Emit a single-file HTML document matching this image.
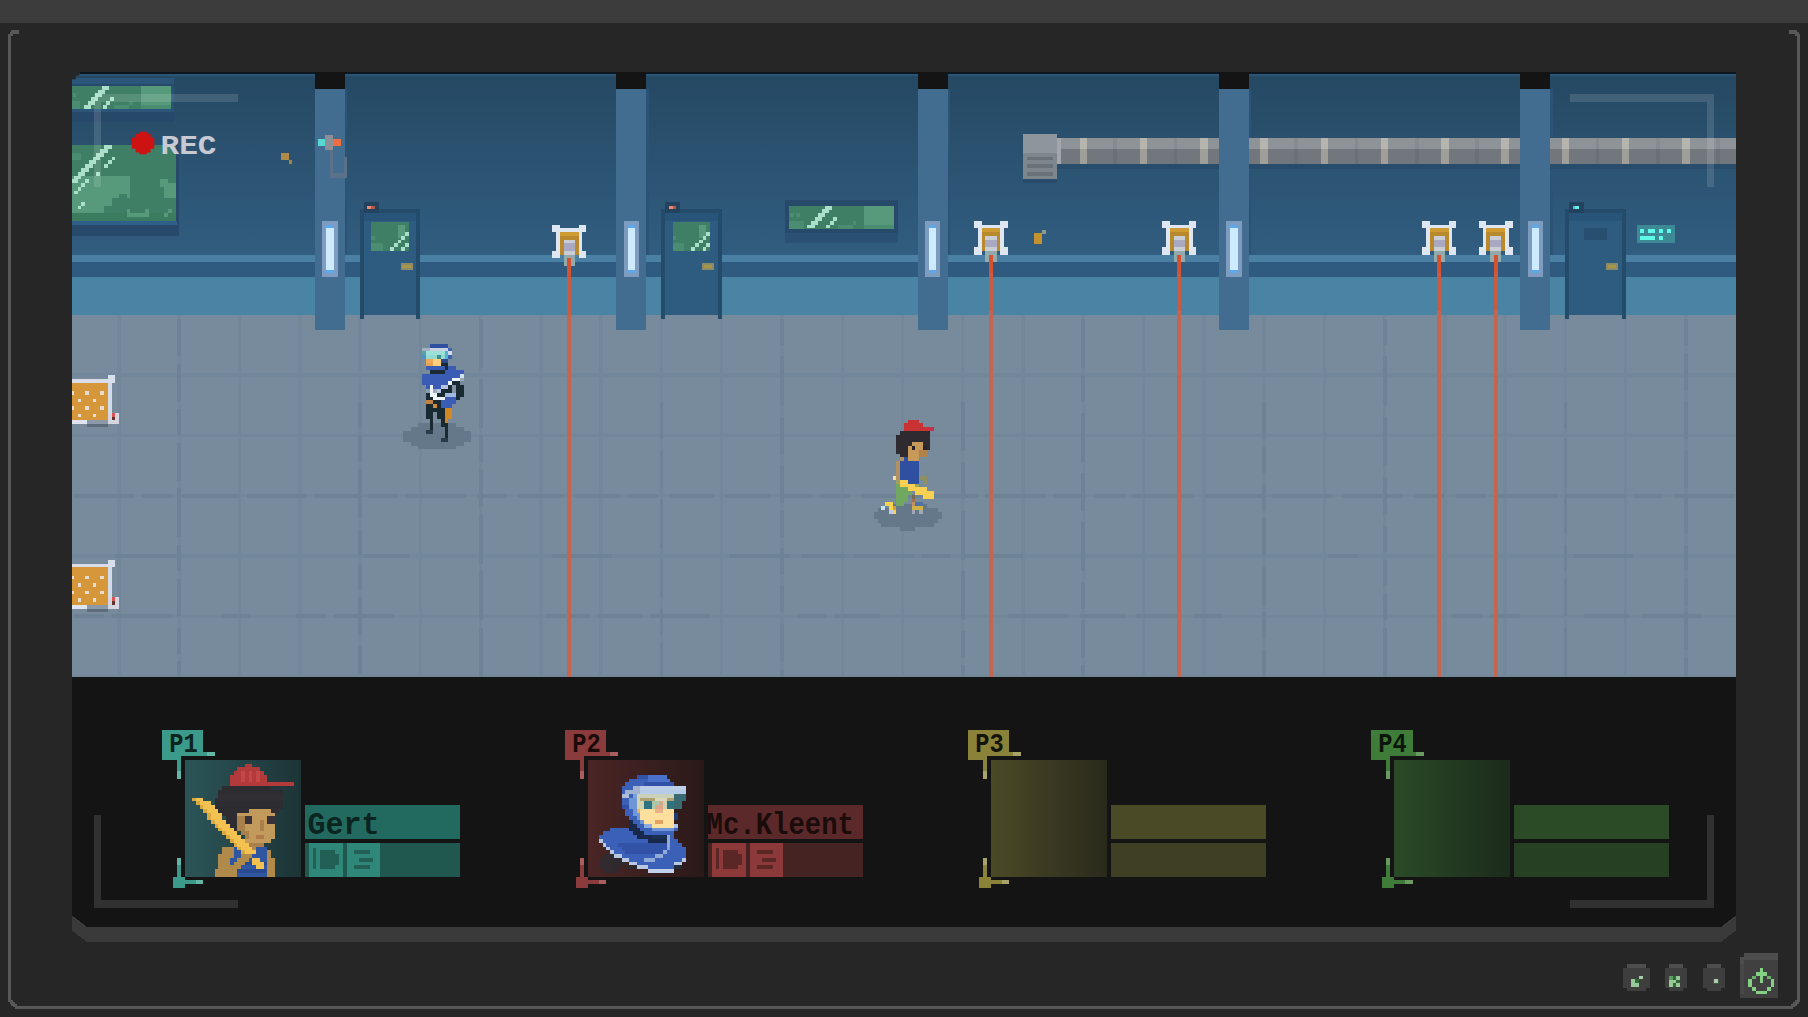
<!DOCTYPE html>
<html lang="en"><head><meta charset="utf-8"><title>Security Cam</title>
<style>
html,body{margin:0;padding:0;background:#262626;overflow:hidden}
svg{display:block}
text{font-family:"Liberation Sans",sans-serif;font-weight:bold}
text.m{font-family:"Liberation Mono",monospace;font-weight:bold}
</style></head><body>
<svg width="1808" height="1017" viewBox="0 0 1808 1017" shape-rendering="crispEdges">
<defs>
<linearGradient id="wallg" x1="0" y1="0" x2="0" y2="1"><stop offset="0" stop-color="#254862"/><stop offset="1" stop-color="#315d80"/></linearGradient>
<clipPath id="scr"><path d="M79.5 72H1736V677H72V79.5H75.8V75.8H79.5Z"/></clipPath>
<linearGradient id="pg0" x1="0" y1="0" x2="1" y2="0"><stop offset="0" stop-color="#2c5558"/><stop offset="1" stop-color="#1c3436"/></linearGradient>
<linearGradient id="pg1" x1="0" y1="0" x2="1" y2="0"><stop offset="0" stop-color="#4b2525"/><stop offset="1" stop-color="#2a1919"/></linearGradient>
<linearGradient id="pg2" x1="0" y1="0" x2="1" y2="0"><stop offset="0" stop-color="#4b4a27"/><stop offset="1" stop-color="#2a2a1c"/></linearGradient>
<linearGradient id="pg3" x1="0" y1="0" x2="1" y2="0"><stop offset="0" stop-color="#2b4b27"/><stop offset="1" stop-color="#1b2b1b"/></linearGradient>
</defs>
<rect x="0" y="0" width="1808" height="1017" fill="#262626"/>
<rect x="0" y="0" width="1808" height="22.5" fill="#3c3c3c"/>
<rect x="7.8" y="34" width="3.5" height="967.5" fill="#585858"/>
<rect x="11.3" y="30" width="7.5" height="3.8" fill="#585858"/>
<rect x="9.5" y="31.8" width="3.5" height="3.8" fill="#585858"/>
<rect x="1796.7" y="34" width="3.5" height="967.5" fill="#585858"/>
<rect x="1789.2" y="30" width="7.5" height="3.8" fill="#585858"/>
<rect x="1795" y="31.8" width="3.5" height="3.8" fill="#585858"/>
<rect x="15" y="1005.5" width="1778" height="3.5" fill="#585858"/>
<rect x="9.5" y="1000" width="3.7" height="3.7" fill="#585858"/>
<rect x="11.3" y="1001.8" width="3.7" height="3.7" fill="#585858"/>
<rect x="13.2" y="1003.7" width="3.8" height="3.7" fill="#585858"/>
<rect x="1794.8" y="1000" width="3.7" height="3.7" fill="#585858"/>
<rect x="1793" y="1001.8" width="3.7" height="3.7" fill="#585858"/>
<rect x="1791" y="1003.7" width="3.8" height="3.7" fill="#585858"/>
<path d="M72 900H1736V930.5L1721.3 941.8H86.7L72 930.5Z" fill="#3a3a3a"/>
<path d="M72 677H1736V915.4L1721.3 926.7H86.7L72 915.4Z" fill="#141414"/>
<g clip-path="url(#scr)"><g>
<g transform="translate(-1.5 -1.5) scale(3.76667)">
<rect x="18" y="19" width="446" height="49" fill="url(#wallg)"/>
<rect x="18" y="68" width="446" height="2" fill="#4a80a3"/>
<rect x="18" y="70" width="446" height="4" fill="#2f5b80"/>
<rect x="18" y="74" width="446" height="10" fill="#4a84a4"/>
<rect x="18" y="84" width="446" height="97" fill="#778b9c"/>
<rect x="18" y="19.9" width="446" height="0.8" fill="#2b5577"/>
<rect x="18" y="19" width="446" height="0.95" fill="#0d151d"/>
<rect x="31.55" y="84" width="0.9" height="97" fill="#72879a"/>
<rect x="47.55" y="84" width="0.9" height="97" fill="#72879a"/>
<rect x="63.55" y="84" width="0.9" height="97" fill="#72879a"/>
<rect x="79.55" y="84" width="0.9" height="97" fill="#72879a"/>
<rect x="95.55" y="84" width="0.9" height="97" fill="#72879a"/>
<rect x="111.55" y="84" width="0.9" height="97" fill="#72879a"/>
<rect x="127.55" y="84" width="0.9" height="97" fill="#72879a"/>
<rect x="143.55" y="84" width="0.9" height="97" fill="#72879a"/>
<rect x="159.55" y="84" width="0.9" height="97" fill="#72879a"/>
<rect x="175.55" y="84" width="0.9" height="97" fill="#72879a"/>
<rect x="191.55" y="84" width="0.9" height="97" fill="#72879a"/>
<rect x="207.55" y="84" width="0.9" height="97" fill="#72879a"/>
<rect x="223.55" y="84" width="0.9" height="97" fill="#72879a"/>
<rect x="239.55" y="84" width="0.9" height="97" fill="#72879a"/>
<rect x="255.55" y="84" width="0.9" height="97" fill="#72879a"/>
<rect x="271.55" y="84" width="0.9" height="97" fill="#72879a"/>
<rect x="287.55" y="84" width="0.9" height="97" fill="#72879a"/>
<rect x="303.55" y="84" width="0.9" height="97" fill="#72879a"/>
<rect x="319.55" y="84" width="0.9" height="97" fill="#72879a"/>
<rect x="335.55" y="84" width="0.9" height="97" fill="#72879a"/>
<rect x="351.55" y="84" width="0.9" height="97" fill="#72879a"/>
<rect x="367.55" y="84" width="0.9" height="97" fill="#72879a"/>
<rect x="383.55" y="84" width="0.9" height="97" fill="#72879a"/>
<rect x="399.55" y="84" width="0.9" height="97" fill="#72879a"/>
<rect x="415.55" y="84" width="0.9" height="97" fill="#72879a"/>
<rect x="431.55" y="84" width="0.9" height="97" fill="#72879a"/>
<rect x="447.55" y="84" width="0.9" height="97" fill="#72879a"/>
<rect x="18" y="99.55" width="446" height="0.9" fill="#72879a"/>
<rect x="18" y="115.55" width="446" height="0.9" fill="#72879a"/>
<rect x="18" y="131.55" width="446" height="0.9" fill="#72879a"/>
<rect x="18" y="147.55" width="446" height="0.9" fill="#72879a"/>
<rect x="18" y="163.55" width="446" height="0.9" fill="#72879a"/>
<rect x="18" y="179.55" width="446" height="0.9" fill="#72879a"/>
<rect x="47.5" y="85" width="1" height="10" fill="#6d8295"/>
<rect x="47.5" y="97" width="1" height="10" fill="#6d8295"/>
<rect x="47.5" y="109" width="1" height="7" fill="#6d8295"/>
<rect x="47.5" y="118" width="1" height="10" fill="#6d8295"/>
<rect x="47.5" y="130" width="1" height="13" fill="#6d8295"/>
<rect x="47.5" y="145" width="1" height="7" fill="#6d8295"/>
<rect x="47.5" y="154" width="1" height="10" fill="#6d8295"/>
<rect x="47.5" y="167" width="1" height="7" fill="#6d8295"/>
<rect x="47.5" y="176" width="1" height="4" fill="#6d8295"/>
<rect x="95.5" y="107" width="1" height="7" fill="#6d8295"/>
<rect x="95.5" y="116" width="1" height="7" fill="#6d8295"/>
<rect x="95.5" y="125" width="1" height="13" fill="#6d8295"/>
<rect x="95.5" y="141" width="1" height="7" fill="#6d8295"/>
<rect x="95.5" y="150" width="1" height="7" fill="#6d8295"/>
<rect x="95.5" y="159" width="1" height="10" fill="#6d8295"/>
<rect x="95.5" y="172" width="1" height="7" fill="#6d8295"/>
<rect x="127.5" y="85" width="1" height="13" fill="#6d8295"/>
<rect x="127.5" y="101" width="1" height="13" fill="#6d8295"/>
<rect x="127.5" y="116" width="1" height="7" fill="#6d8295"/>
<rect x="127.5" y="125" width="1" height="10" fill="#6d8295"/>
<rect x="127.5" y="137" width="1" height="13" fill="#6d8295"/>
<rect x="127.5" y="152" width="1" height="13" fill="#6d8295"/>
<rect x="127.5" y="167" width="1" height="13" fill="#6d8295"/>
<rect x="175.5" y="107" width="1" height="10" fill="#6d8295"/>
<rect x="175.5" y="120" width="1" height="10" fill="#6d8295"/>
<rect x="175.5" y="133" width="1" height="13" fill="#6d8295"/>
<rect x="175.5" y="149" width="1" height="10" fill="#6d8295"/>
<rect x="175.5" y="162" width="1" height="7" fill="#6d8295"/>
<rect x="175.5" y="171" width="1" height="9" fill="#6d8295"/>
<rect x="207.5" y="85" width="1" height="7" fill="#6d8295"/>
<rect x="207.5" y="95" width="1" height="13" fill="#6d8295"/>
<rect x="207.5" y="111" width="1" height="10" fill="#6d8295"/>
<rect x="207.5" y="124" width="1" height="10" fill="#6d8295"/>
<rect x="207.5" y="136" width="1" height="7" fill="#6d8295"/>
<rect x="207.5" y="146" width="1" height="7" fill="#6d8295"/>
<rect x="207.5" y="156" width="1" height="7" fill="#6d8295"/>
<rect x="207.5" y="166" width="1" height="10" fill="#6d8295"/>
<rect x="207.5" y="178" width="1" height="2" fill="#6d8295"/>
<rect x="255.5" y="107" width="1" height="13" fill="#6d8295"/>
<rect x="255.5" y="123" width="1" height="10" fill="#6d8295"/>
<rect x="255.5" y="136" width="1" height="13" fill="#6d8295"/>
<rect x="255.5" y="152" width="1" height="13" fill="#6d8295"/>
<rect x="255.5" y="168" width="1" height="7" fill="#6d8295"/>
<rect x="255.5" y="177" width="1" height="3" fill="#6d8295"/>
<rect x="287.5" y="85" width="1" height="13" fill="#6d8295"/>
<rect x="287.5" y="100" width="1" height="7" fill="#6d8295"/>
<rect x="287.5" y="110" width="1" height="13" fill="#6d8295"/>
<rect x="287.5" y="126" width="1" height="10" fill="#6d8295"/>
<rect x="287.5" y="139" width="1" height="13" fill="#6d8295"/>
<rect x="287.5" y="155" width="1" height="7" fill="#6d8295"/>
<rect x="287.5" y="165" width="1" height="10" fill="#6d8295"/>
<rect x="287.5" y="177" width="1" height="3" fill="#6d8295"/>
<rect x="335.5" y="107" width="1" height="10" fill="#6d8295"/>
<rect x="335.5" y="119" width="1" height="7" fill="#6d8295"/>
<rect x="335.5" y="129" width="1" height="7" fill="#6d8295"/>
<rect x="335.5" y="138" width="1" height="10" fill="#6d8295"/>
<rect x="335.5" y="151" width="1" height="10" fill="#6d8295"/>
<rect x="335.5" y="163" width="1" height="7" fill="#6d8295"/>
<rect x="335.5" y="173" width="1" height="7" fill="#6d8295"/>
<rect x="367.5" y="85" width="1" height="7" fill="#6d8295"/>
<rect x="367.5" y="95" width="1" height="13" fill="#6d8295"/>
<rect x="367.5" y="111" width="1" height="13" fill="#6d8295"/>
<rect x="367.5" y="127" width="1" height="10" fill="#6d8295"/>
<rect x="367.5" y="140" width="1" height="7" fill="#6d8295"/>
<rect x="367.5" y="149" width="1" height="7" fill="#6d8295"/>
<rect x="367.5" y="158" width="1" height="7" fill="#6d8295"/>
<rect x="367.5" y="167" width="1" height="13" fill="#6d8295"/>
<rect x="415.5" y="107" width="1" height="7" fill="#6d8295"/>
<rect x="415.5" y="117" width="1" height="13" fill="#6d8295"/>
<rect x="415.5" y="132" width="1" height="10" fill="#6d8295"/>
<rect x="415.5" y="145" width="1" height="7" fill="#6d8295"/>
<rect x="415.5" y="154" width="1" height="10" fill="#6d8295"/>
<rect x="415.5" y="167" width="1" height="13" fill="#6d8295"/>
<rect x="447.5" y="85" width="1" height="7" fill="#6d8295"/>
<rect x="447.5" y="94" width="1" height="10" fill="#6d8295"/>
<rect x="447.5" y="107" width="1" height="10" fill="#6d8295"/>
<rect x="447.5" y="120" width="1" height="10" fill="#6d8295"/>
<rect x="447.5" y="132" width="1" height="10" fill="#6d8295"/>
<rect x="447.5" y="145" width="1" height="7" fill="#6d8295"/>
<rect x="447.5" y="154" width="1" height="7" fill="#6d8295"/>
<rect x="447.5" y="163" width="1" height="10" fill="#6d8295"/>
<rect x="447.5" y="175" width="1" height="5" fill="#6d8295"/>
<rect x="20" y="131.5" width="16" height="1" fill="#6d8295"/>
<rect x="38" y="131.5" width="8" height="1" fill="#6d8295"/>
<rect x="48" y="131.5" width="16" height="1" fill="#6d8295"/>
<rect x="66" y="131.5" width="16" height="1" fill="#6d8295"/>
<rect x="84" y="131.5" width="12" height="1" fill="#6d8295"/>
<rect x="98" y="131.5" width="8" height="1" fill="#6d8295"/>
<rect x="108" y="131.5" width="16" height="1" fill="#6d8295"/>
<rect x="127" y="131.5" width="8" height="1" fill="#6d8295"/>
<rect x="138" y="131.5" width="12" height="1" fill="#6d8295"/>
<rect x="153" y="131.5" width="12" height="1" fill="#6d8295"/>
<rect x="167" y="131.5" width="8" height="1" fill="#6d8295"/>
<rect x="178" y="131.5" width="12" height="1" fill="#6d8295"/>
<rect x="193" y="131.5" width="12" height="1" fill="#6d8295"/>
<rect x="208" y="131.5" width="8" height="1" fill="#6d8295"/>
<rect x="218" y="131.5" width="8" height="1" fill="#6d8295"/>
<rect x="229" y="131.5" width="16" height="1" fill="#6d8295"/>
<rect x="248" y="131.5" width="12" height="1" fill="#6d8295"/>
<rect x="262" y="131.5" width="16" height="1" fill="#6d8295"/>
<rect x="280" y="131.5" width="8" height="1" fill="#6d8295"/>
<rect x="291" y="131.5" width="8" height="1" fill="#6d8295"/>
<rect x="301" y="131.5" width="16" height="1" fill="#6d8295"/>
<rect x="320" y="131.5" width="16" height="1" fill="#6d8295"/>
<rect x="338" y="131.5" width="16" height="1" fill="#6d8295"/>
<rect x="357" y="131.5" width="16" height="1" fill="#6d8295"/>
<rect x="376" y="131.5" width="8" height="1" fill="#6d8295"/>
<rect x="387" y="131.5" width="8" height="1" fill="#6d8295"/>
<rect x="398" y="131.5" width="16" height="1" fill="#6d8295"/>
<rect x="416" y="131.5" width="16" height="1" fill="#6d8295"/>
<rect x="434" y="131.5" width="8" height="1" fill="#6d8295"/>
<rect x="445" y="131.5" width="16" height="1" fill="#6d8295"/>
<rect x="31" y="147.5" width="16" height="1" fill="#6d8295"/>
<rect x="97" y="147.5" width="12" height="1" fill="#6d8295"/>
<rect x="147" y="147.5" width="16" height="1" fill="#6d8295"/>
<rect x="194" y="147.5" width="16" height="1" fill="#6d8295"/>
<rect x="213" y="147.5" width="12" height="1" fill="#6d8295"/>
<rect x="227" y="147.5" width="16" height="1" fill="#6d8295"/>
<rect x="245" y="147.5" width="8" height="1" fill="#6d8295"/>
<rect x="256" y="147.5" width="16" height="1" fill="#6d8295"/>
<rect x="353" y="147.5" width="8" height="1" fill="#6d8295"/>
<rect x="418" y="147.5" width="16" height="1" fill="#6d8295"/>
<rect x="20" y="163.5" width="8" height="1" fill="#6d8295"/>
<rect x="30" y="163.5" width="16" height="1" fill="#6d8295"/>
<rect x="59" y="163.5" width="8" height="1" fill="#6d8295"/>
<rect x="79" y="163.5" width="8" height="1" fill="#6d8295"/>
<rect x="89" y="163.5" width="16" height="1" fill="#6d8295"/>
<rect x="145" y="163.5" width="12" height="1" fill="#6d8295"/>
<rect x="159" y="163.5" width="12" height="1" fill="#6d8295"/>
<rect x="173" y="163.5" width="16" height="1" fill="#6d8295"/>
<rect x="212" y="163.5" width="8" height="1" fill="#6d8295"/>
<rect x="222" y="163.5" width="12" height="1" fill="#6d8295"/>
<rect x="268" y="163.5" width="16" height="1" fill="#6d8295"/>
<rect x="287" y="163.5" width="12" height="1" fill="#6d8295"/>
<rect x="302" y="163.5" width="12" height="1" fill="#6d8295"/>
<rect x="317" y="163.5" width="8" height="1" fill="#6d8295"/>
<rect x="386" y="163.5" width="8" height="1" fill="#6d8295"/>
<rect x="396" y="163.5" width="8" height="1" fill="#6d8295"/>
<rect x="421" y="163.5" width="12" height="1" fill="#6d8295"/>
<rect x="436" y="163.5" width="16" height="1" fill="#6d8295"/>
<rect x="16.7" y="21.1" width="30" height="1.5" fill="#2b5579"/>
<rect x="16.7" y="22.6" width="30" height="0.6" fill="#27496a"/>
<rect x="16.7" y="29.2" width="30" height="0.8" fill="#2b5579"/>
<rect x="16.7" y="30.2" width="30" height="2.6" fill="#26496a"/>
<rect x="45.7" y="23.2" width="1" height="7" fill="#2a5378"/>
<rect x="17.7" y="23.2" width="28" height="6.1" fill="#3f7f65"/>
<rect x="37.7" y="23.2" width="8" height="5" fill="#569a7b"/>
<rect x="37.7" y="28.2" width="8" height="1.1" fill="#4a8d70"/>
<rect x="17.7" y="27.2" width="4" height="2.1" fill="#4a8d70"/>
<rect x="30.7" y="28.4" width="4" height="0.9" fill="#4a8d70"/>
<rect x="18.2" y="25.2" width="1" height="1" fill="#4a8d70"/>
<rect x="19.7" y="25.2" width="1" height="1" fill="#4a8d70"/>
<rect x="34.7" y="27.2" width="1" height="1" fill="#4a8d70"/>
<rect x="22.7" y="28.2" width="1.9" height="1.05" fill="#a9dfcb"/>
<rect x="23.65" y="27.2" width="1.9" height="1.05" fill="#a9dfcb"/>
<rect x="24.6" y="26.2" width="1.9" height="1.05" fill="#a9dfcb"/>
<rect x="25.55" y="25.2" width="1.9" height="1.05" fill="#a9dfcb"/>
<rect x="26.5" y="24.2" width="1.9" height="1.05" fill="#a9dfcb"/>
<rect x="27.45" y="23.2" width="1.9" height="1.05" fill="#a9dfcb"/>
<rect x="27.7" y="28.2" width="1" height="1.05" fill="#a9dfcb"/>
<rect x="28.65" y="27.2" width="1" height="1.05" fill="#a9dfcb"/>
<rect x="29.6" y="26.2" width="1" height="1.05" fill="#a9dfcb"/>
<rect x="208.75" y="53.6" width="30" height="8.6" fill="#27496a"/>
<rect x="208.75" y="62.2" width="30" height="2.8" fill="#2a5174"/>
<rect x="209.75" y="55" width="28" height="6.1" fill="#3f7f65"/>
<rect x="229.75" y="55" width="8" height="5" fill="#569a7b"/>
<rect x="229.75" y="60" width="8" height="1.1" fill="#4a8d70"/>
<rect x="209.75" y="59" width="4" height="2.1" fill="#4a8d70"/>
<rect x="222.75" y="60.2" width="4" height="0.9" fill="#4a8d70"/>
<rect x="210.25" y="57" width="1" height="1" fill="#4a8d70"/>
<rect x="211.75" y="57" width="1" height="1" fill="#4a8d70"/>
<rect x="226.75" y="59" width="1" height="1" fill="#4a8d70"/>
<rect x="214.75" y="60" width="1.9" height="1.05" fill="#a9dfcb"/>
<rect x="215.7" y="59" width="1.9" height="1.05" fill="#a9dfcb"/>
<rect x="216.65" y="58" width="1.9" height="1.05" fill="#a9dfcb"/>
<rect x="217.6" y="57" width="1.9" height="1.05" fill="#a9dfcb"/>
<rect x="218.55" y="56" width="1.9" height="1.05" fill="#a9dfcb"/>
<rect x="219.5" y="55" width="1.9" height="1.05" fill="#a9dfcb"/>
<rect x="219.75" y="60" width="1" height="1.05" fill="#a9dfcb"/>
<rect x="220.7" y="59" width="1" height="1.05" fill="#a9dfcb"/>
<rect x="221.65" y="58" width="1" height="1.05" fill="#a9dfcb"/>
<rect x="18" y="39" width="30" height="21" fill="#27496a"/>
<rect x="18" y="60" width="30" height="3" fill="#27496a"/>
<rect x="18" y="59" width="29.3" height="1" fill="#30608a"/>
<rect x="18" y="39" width="29" height="20" fill="#3f7f65"/>
<rect x="18" y="47" width="17" height="10" fill="#569a7b"/>
<rect x="30" y="53" width="5" height="4" fill="#3f7f65"/>
<rect x="28" y="55" width="3" height="2" fill="#3f7f65"/>
<rect x="32" y="52" width="2" height="1" fill="#3f7f65"/>
<rect x="18" y="57" width="29" height="2" fill="#3b7b5f"/>
<rect x="18" y="41" width="4" height="2" fill="#4a8d70"/>
<rect x="44" y="49" width="3" height="4" fill="#569a7b"/>
<rect x="43" y="48" width="2" height="2" fill="#569a7b"/>
<rect x="34" y="57" width="6" height="1" fill="#569a7b"/>
<rect x="34" y="56" width="1" height="1" fill="#569a7b"/>
<rect x="39" y="56" width="1" height="1" fill="#569a7b"/>
<rect x="44" y="57" width="1" height="1" fill="#569a7b"/>
<rect x="45" y="56" width="1" height="1" fill="#569a7b"/>
<rect x="19" y="48" width="2" height="1" fill="#a9dfcb"/>
<rect x="20" y="47" width="2" height="1" fill="#a9dfcb"/>
<rect x="21" y="46" width="2" height="1" fill="#a9dfcb"/>
<rect x="22" y="45" width="2" height="1" fill="#a9dfcb"/>
<rect x="23" y="44" width="2" height="1" fill="#a9dfcb"/>
<rect x="24" y="43" width="2" height="1" fill="#a9dfcb"/>
<rect x="25" y="42" width="2" height="1" fill="#a9dfcb"/>
<rect x="26" y="41" width="2" height="1" fill="#a9dfcb"/>
<rect x="27" y="40" width="2" height="1" fill="#a9dfcb"/>
<rect x="28" y="39" width="2" height="1" fill="#a9dfcb"/>
<rect x="18" y="49" width="1" height="1" fill="#a9dfcb"/>
<rect x="28" y="44" width="1" height="1" fill="#a9dfcb"/>
<rect x="29" y="43" width="1" height="1" fill="#a9dfcb"/>
<rect x="30" y="42" width="1" height="1" fill="#a9dfcb"/>
<rect x="26" y="46" width="1" height="1" fill="#a9dfcb"/>
<rect x="20" y="51" width="1" height="1" fill="#a9dfcb"/>
<rect x="21" y="50" width="1" height="1" fill="#a9dfcb"/>
<rect x="22" y="49" width="1" height="1" fill="#a9dfcb"/>
<rect x="23" y="48" width="1" height="1" fill="#a9dfcb"/>
<rect x="21" y="55" width="1" height="1" fill="#a9dfcb"/>
<rect x="22" y="54" width="1" height="1" fill="#a9dfcb"/>
<rect x="92" y="24" width="0.6" height="44" fill="#2b5375"/>
<rect x="172" y="24" width="0.6" height="44" fill="#2b5375"/>
<rect x="252" y="24" width="0.6" height="44" fill="#2b5375"/>
<rect x="332" y="24" width="0.6" height="44" fill="#2b5375"/>
<rect x="412" y="24" width="0.6" height="44" fill="#2b5375"/>
<rect x="281" y="44" width="183" height="1.2" fill="#284c6c"/>
<rect x="272" y="48" width="9" height="1" fill="#284c6c"/>
<rect x="281" y="37" width="183" height="3" fill="#8e9397"/>
<rect x="281" y="40" width="183" height="4" fill="#71777c"/>
<rect x="281" y="37" width="1" height="7" fill="#a3a7ab"/>
<rect x="287" y="37" width="2" height="3" fill="#b6b4ae"/>
<rect x="287" y="40" width="2" height="4" fill="#a09e98"/>
<rect x="296" y="37" width="1" height="3" fill="#858b90"/>
<rect x="296" y="40" width="1" height="4" fill="#6a7075"/>
<rect x="303" y="37" width="2" height="3" fill="#b6b4ae"/>
<rect x="303" y="40" width="2" height="4" fill="#a09e98"/>
<rect x="312" y="37" width="1" height="3" fill="#858b90"/>
<rect x="312" y="40" width="1" height="4" fill="#6a7075"/>
<rect x="319" y="37" width="2" height="3" fill="#b6b4ae"/>
<rect x="319" y="40" width="2" height="4" fill="#a09e98"/>
<rect x="328" y="37" width="1" height="3" fill="#858b90"/>
<rect x="328" y="40" width="1" height="4" fill="#6a7075"/>
<rect x="335" y="37" width="2" height="3" fill="#b6b4ae"/>
<rect x="335" y="40" width="2" height="4" fill="#a09e98"/>
<rect x="344" y="37" width="1" height="3" fill="#858b90"/>
<rect x="344" y="40" width="1" height="4" fill="#6a7075"/>
<rect x="351" y="37" width="2" height="3" fill="#b6b4ae"/>
<rect x="351" y="40" width="2" height="4" fill="#a09e98"/>
<rect x="360" y="37" width="1" height="3" fill="#858b90"/>
<rect x="360" y="40" width="1" height="4" fill="#6a7075"/>
<rect x="367" y="37" width="2" height="3" fill="#b6b4ae"/>
<rect x="367" y="40" width="2" height="4" fill="#a09e98"/>
<rect x="376" y="37" width="1" height="3" fill="#858b90"/>
<rect x="376" y="40" width="1" height="4" fill="#6a7075"/>
<rect x="383" y="37" width="2" height="3" fill="#b6b4ae"/>
<rect x="383" y="40" width="2" height="4" fill="#a09e98"/>
<rect x="392" y="37" width="1" height="3" fill="#858b90"/>
<rect x="392" y="40" width="1" height="4" fill="#6a7075"/>
<rect x="399" y="37" width="2" height="3" fill="#b6b4ae"/>
<rect x="399" y="40" width="2" height="4" fill="#a09e98"/>
<rect x="408" y="37" width="1" height="3" fill="#858b90"/>
<rect x="408" y="40" width="1" height="4" fill="#6a7075"/>
<rect x="415" y="37" width="2" height="3" fill="#b6b4ae"/>
<rect x="415" y="40" width="2" height="4" fill="#a09e98"/>
<rect x="424" y="37" width="1" height="3" fill="#858b90"/>
<rect x="424" y="40" width="1" height="4" fill="#6a7075"/>
<rect x="431" y="37" width="2" height="3" fill="#b6b4ae"/>
<rect x="431" y="40" width="2" height="4" fill="#a09e98"/>
<rect x="440" y="37" width="1" height="3" fill="#858b90"/>
<rect x="440" y="40" width="1" height="4" fill="#6a7075"/>
<rect x="447" y="37" width="2" height="3" fill="#b6b4ae"/>
<rect x="447" y="40" width="2" height="4" fill="#a09e98"/>
<rect x="456" y="37" width="1" height="3" fill="#858b90"/>
<rect x="456" y="40" width="1" height="4" fill="#6a7075"/>
<rect x="463" y="37" width="2" height="3" fill="#b6b4ae"/>
<rect x="463" y="40" width="2" height="4" fill="#a09e98"/>
<rect x="472" y="37" width="1" height="3" fill="#858b90"/>
<rect x="472" y="40" width="1" height="4" fill="#6a7075"/>
<rect x="272" y="36" width="9" height="12" fill="#7e878d"/>
<rect x="272" y="36" width="9" height="5" fill="#8d969c"/>
<rect x="273" y="42" width="7" height="1" fill="#6a7279"/>
<rect x="273" y="44" width="7" height="1" fill="#6a7279"/>
<rect x="273" y="46" width="7" height="1" fill="#6a7279"/>
<rect x="95.95" y="56" width="16" height="29" fill="#254b6a"/>
<rect x="96.95" y="57" width="14" height="28" fill="#778b9c"/>
<rect x="96.95" y="57" width="14" height="27" fill="#2e5b80"/>
<rect x="96.95" y="57" width="14" height="2" fill="#29547a"/>
<rect x="96.95" y="54" width="4" height="3" fill="#22425e"/>
<rect x="97.95" y="55" width="1" height="1" fill="#f08674"/>
<rect x="98.95" y="55" width="1" height="1" fill="#b65a48"/>
<rect x="98.95" y="59.4" width="10" height="7.6" fill="#3f7f65"/>
<rect x="105.95" y="60" width="2" height="3.5" fill="#569a7b"/>
<rect x="98.95" y="65" width="3" height="2" fill="#4a8d70"/>
<rect x="98.95" y="63" width="1" height="1" fill="#4a8d70"/>
<rect x="103.95" y="66" width="1" height="1" fill="#a9dfcb"/>
<rect x="104.95" y="65" width="1" height="1" fill="#a9dfcb"/>
<rect x="105.95" y="64" width="1" height="1" fill="#a9dfcb"/>
<rect x="106.95" y="63" width="1" height="1" fill="#a9dfcb"/>
<rect x="107.95" y="62" width="1" height="1" fill="#a9dfcb"/>
<rect x="106.95" y="66" width="1" height="1" fill="#a9dfcb"/>
<rect x="107.95" y="65" width="1" height="1" fill="#a9dfcb"/>
<rect x="106.75" y="70.2" width="3.2" height="1.8" fill="#8c8a68"/>
<rect x="107.25" y="70.7" width="2.2" height="0.8" fill="#a69648"/>
<rect x="175.95" y="56" width="16" height="29" fill="#254b6a"/>
<rect x="176.95" y="57" width="14" height="28" fill="#778b9c"/>
<rect x="176.95" y="57" width="14" height="27" fill="#2e5b80"/>
<rect x="176.95" y="57" width="14" height="2" fill="#29547a"/>
<rect x="176.95" y="54" width="4" height="3" fill="#22425e"/>
<rect x="177.95" y="55" width="1" height="1" fill="#f08674"/>
<rect x="178.95" y="55" width="1" height="1" fill="#b65a48"/>
<rect x="178.95" y="59.4" width="10" height="7.6" fill="#3f7f65"/>
<rect x="185.95" y="60" width="2" height="3.5" fill="#569a7b"/>
<rect x="178.95" y="65" width="3" height="2" fill="#4a8d70"/>
<rect x="178.95" y="63" width="1" height="1" fill="#4a8d70"/>
<rect x="183.95" y="66" width="1" height="1" fill="#a9dfcb"/>
<rect x="184.95" y="65" width="1" height="1" fill="#a9dfcb"/>
<rect x="185.95" y="64" width="1" height="1" fill="#a9dfcb"/>
<rect x="186.95" y="63" width="1" height="1" fill="#a9dfcb"/>
<rect x="187.95" y="62" width="1" height="1" fill="#a9dfcb"/>
<rect x="186.95" y="66" width="1" height="1" fill="#a9dfcb"/>
<rect x="187.95" y="65" width="1" height="1" fill="#a9dfcb"/>
<rect x="186.75" y="70.2" width="3.2" height="1.8" fill="#8c8a68"/>
<rect x="187.25" y="70.7" width="2.2" height="0.8" fill="#a69648"/>
<rect x="415.95" y="56" width="16" height="29" fill="#254b6a"/>
<rect x="416.95" y="57" width="14" height="28" fill="#778b9c"/>
<rect x="416.95" y="57" width="14" height="27" fill="#2e5b80"/>
<rect x="416.95" y="57" width="14" height="2" fill="#29547a"/>
<rect x="416.95" y="54" width="4" height="3" fill="#22425e"/>
<rect x="417.95" y="55" width="1" height="1" fill="#4cc8c8"/>
<rect x="418.55" y="55" width="1" height="1" fill="#62f2e6"/>
<rect x="420.95" y="61" width="6" height="3" fill="#294f70"/>
<rect x="426.75" y="70.2" width="3.2" height="1.8" fill="#8c8a68"/>
<rect x="427.25" y="70.7" width="2.2" height="0.8" fill="#a69648"/>
<rect x="435" y="60" width="10" height="5" fill="#3d8a96"/>
<rect x="435.8" y="61.2" width="1" height="1" fill="#60fbe8"/>
<rect x="437.9" y="61.2" width="1.9" height="1" fill="#60fbe8"/>
<rect x="440.8" y="61.2" width="1" height="1" fill="#60fbe8"/>
<rect x="442.9" y="61.2" width="1" height="1" fill="#60fbe8"/>
<rect x="435.8" y="63" width="4" height="1" fill="#60fbe8"/>
<rect x="440.8" y="63" width="1" height="1" fill="#60fbe8"/>
<rect x="75" y="41" width="2" height="2" fill="#b08a48"/>
<rect x="77" y="43" width="1" height="1" fill="#a58246"/>
<rect x="275" y="62.3" width="2" height="2.9" fill="#c2922f"/>
<rect x="277" y="61.5" width="1" height="1" fill="#8a9a8e"/>
<rect x="84" y="19" width="8" height="69" fill="#426c90"/>
<rect x="84" y="19" width="8" height="5" fill="#141414"/>
<rect x="86" y="59" width="4" height="15" fill="#7d9cc0"/>
<rect x="87" y="60" width="2" height="13" fill="#cdeaff"/>
<rect x="87" y="60" width="2" height="1" fill="#5ba9ea"/>
<rect x="87" y="72" width="2" height="1" fill="#5ba9ea"/>
<rect x="164" y="19" width="8" height="69" fill="#426c90"/>
<rect x="164" y="19" width="8" height="5" fill="#141414"/>
<rect x="166" y="59" width="4" height="15" fill="#7d9cc0"/>
<rect x="167" y="60" width="2" height="13" fill="#cdeaff"/>
<rect x="167" y="60" width="2" height="1" fill="#5ba9ea"/>
<rect x="167" y="72" width="2" height="1" fill="#5ba9ea"/>
<rect x="244" y="19" width="8" height="69" fill="#426c90"/>
<rect x="244" y="19" width="8" height="5" fill="#141414"/>
<rect x="246" y="59" width="4" height="15" fill="#7d9cc0"/>
<rect x="247" y="60" width="2" height="13" fill="#cdeaff"/>
<rect x="247" y="60" width="2" height="1" fill="#5ba9ea"/>
<rect x="247" y="72" width="2" height="1" fill="#5ba9ea"/>
<rect x="324" y="19" width="8" height="69" fill="#426c90"/>
<rect x="324" y="19" width="8" height="5" fill="#141414"/>
<rect x="326" y="59" width="4" height="15" fill="#7d9cc0"/>
<rect x="327" y="60" width="2" height="13" fill="#cdeaff"/>
<rect x="327" y="60" width="2" height="1" fill="#5ba9ea"/>
<rect x="327" y="72" width="2" height="1" fill="#5ba9ea"/>
<rect x="404" y="19" width="8" height="69" fill="#426c90"/>
<rect x="404" y="19" width="8" height="5" fill="#141414"/>
<rect x="406" y="59" width="4" height="15" fill="#7d9cc0"/>
<rect x="407" y="60" width="2" height="13" fill="#cdeaff"/>
<rect x="407" y="60" width="2" height="1" fill="#5ba9ea"/>
<rect x="407" y="72" width="2" height="1" fill="#5ba9ea"/>
<rect x="87.95" y="38.6" width="0.9" height="8.95" fill="#5b7189"/>
<rect x="87.95" y="46.2" width="4.7" height="1.35" fill="#5b7189"/>
<rect x="91.85" y="42" width="0.8" height="5.55" fill="#5b7189"/>
<rect x="84.8" y="37.2" width="2" height="2" fill="#58d8d0"/>
<rect x="88.8" y="37.2" width="2" height="2" fill="#ee6e42"/>
<rect x="86.8" y="36.3" width="2" height="3.9" fill="#8a8f98"/>
<rect x="149" y="62" width="5" height="6" fill="#b8892d"/>
<rect x="149" y="62" width="5" height="1" fill="#cf9c33"/>
<rect x="147" y="60" width="2" height="2" fill="#dde6f1"/>
<rect x="154" y="60" width="2" height="2" fill="#dde6f1"/>
<rect x="147" y="67" width="2" height="2" fill="#dde6f1"/>
<rect x="154" y="67" width="2" height="2" fill="#dde6f1"/>
<rect x="149" y="61" width="5" height="1" fill="#dde6f1"/>
<rect x="148" y="62" width="1" height="5" fill="#dde6f1"/>
<rect x="154" y="62" width="1" height="5" fill="#dde6f1"/>
<rect x="150" y="64" width="3" height="7" fill="#93aaac"/>
<rect x="150" y="64" width="3" height="1" fill="#c9cdd6"/>
<rect x="150" y="65" width="3" height="2" fill="#a9a9c2"/>
<rect x="150" y="67" width="3" height="1" fill="#c9cdd6"/>
<rect x="151" y="69" width="1" height="5" fill="#d4522f"/>
<rect x="151" y="74" width="1" height="10" fill="#c85c42"/>
<rect x="151" y="84" width="1" height="97" fill="#c4654f"/>
<rect x="261" y="61" width="5" height="6" fill="#b8892d"/>
<rect x="261" y="61" width="5" height="1" fill="#cf9c33"/>
<rect x="259" y="59" width="2" height="2" fill="#dde6f1"/>
<rect x="266" y="59" width="2" height="2" fill="#dde6f1"/>
<rect x="259" y="66" width="2" height="2" fill="#dde6f1"/>
<rect x="266" y="66" width="2" height="2" fill="#dde6f1"/>
<rect x="261" y="60" width="5" height="1" fill="#dde6f1"/>
<rect x="260" y="61" width="1" height="5" fill="#dde6f1"/>
<rect x="266" y="61" width="1" height="5" fill="#dde6f1"/>
<rect x="262" y="63" width="3" height="7" fill="#93aaac"/>
<rect x="262" y="63" width="3" height="1" fill="#c9cdd6"/>
<rect x="262" y="64" width="3" height="2" fill="#a9a9c2"/>
<rect x="262" y="66" width="3" height="1" fill="#c9cdd6"/>
<rect x="263" y="68" width="1" height="5" fill="#d4522f"/>
<rect x="263" y="73" width="1" height="10" fill="#c85c42"/>
<rect x="263" y="83" width="1" height="98" fill="#c4654f"/>
<rect x="311" y="61" width="5" height="6" fill="#b8892d"/>
<rect x="311" y="61" width="5" height="1" fill="#cf9c33"/>
<rect x="309" y="59" width="2" height="2" fill="#dde6f1"/>
<rect x="316" y="59" width="2" height="2" fill="#dde6f1"/>
<rect x="309" y="66" width="2" height="2" fill="#dde6f1"/>
<rect x="316" y="66" width="2" height="2" fill="#dde6f1"/>
<rect x="311" y="60" width="5" height="1" fill="#dde6f1"/>
<rect x="310" y="61" width="1" height="5" fill="#dde6f1"/>
<rect x="316" y="61" width="1" height="5" fill="#dde6f1"/>
<rect x="312" y="63" width="3" height="7" fill="#93aaac"/>
<rect x="312" y="63" width="3" height="1" fill="#c9cdd6"/>
<rect x="312" y="64" width="3" height="2" fill="#a9a9c2"/>
<rect x="312" y="66" width="3" height="1" fill="#c9cdd6"/>
<rect x="313" y="68" width="1" height="5" fill="#d4522f"/>
<rect x="313" y="73" width="1" height="10" fill="#c85c42"/>
<rect x="313" y="83" width="1" height="98" fill="#c4654f"/>
<rect x="380" y="61" width="5" height="6" fill="#b8892d"/>
<rect x="380" y="61" width="5" height="1" fill="#cf9c33"/>
<rect x="378" y="59" width="2" height="2" fill="#dde6f1"/>
<rect x="385" y="59" width="2" height="2" fill="#dde6f1"/>
<rect x="378" y="66" width="2" height="2" fill="#dde6f1"/>
<rect x="385" y="66" width="2" height="2" fill="#dde6f1"/>
<rect x="380" y="60" width="5" height="1" fill="#dde6f1"/>
<rect x="379" y="61" width="1" height="5" fill="#dde6f1"/>
<rect x="385" y="61" width="1" height="5" fill="#dde6f1"/>
<rect x="381" y="63" width="3" height="7" fill="#93aaac"/>
<rect x="381" y="63" width="3" height="1" fill="#c9cdd6"/>
<rect x="381" y="64" width="3" height="2" fill="#a9a9c2"/>
<rect x="381" y="66" width="3" height="1" fill="#c9cdd6"/>
<rect x="382" y="68" width="1" height="5" fill="#d4522f"/>
<rect x="382" y="73" width="1" height="10" fill="#c85c42"/>
<rect x="382" y="83" width="1" height="98" fill="#c4654f"/>
<rect x="395" y="61" width="5" height="6" fill="#b8892d"/>
<rect x="395" y="61" width="5" height="1" fill="#cf9c33"/>
<rect x="393" y="59" width="2" height="2" fill="#dde6f1"/>
<rect x="400" y="59" width="2" height="2" fill="#dde6f1"/>
<rect x="393" y="66" width="2" height="2" fill="#dde6f1"/>
<rect x="400" y="66" width="2" height="2" fill="#dde6f1"/>
<rect x="395" y="60" width="5" height="1" fill="#dde6f1"/>
<rect x="394" y="61" width="1" height="5" fill="#dde6f1"/>
<rect x="400" y="61" width="1" height="5" fill="#dde6f1"/>
<rect x="396" y="63" width="3" height="7" fill="#93aaac"/>
<rect x="396" y="63" width="3" height="1" fill="#c9cdd6"/>
<rect x="396" y="64" width="3" height="2" fill="#a9a9c2"/>
<rect x="396" y="66" width="3" height="1" fill="#c9cdd6"/>
<rect x="397" y="68" width="1" height="5" fill="#d4522f"/>
<rect x="397" y="73" width="1" height="10" fill="#c85c42"/>
<rect x="397" y="83" width="1" height="98" fill="#c4654f"/>
<rect x="18" y="101" width="11" height="1" fill="#d8dde9"/>
<rect x="18" y="102" width="11" height="10" fill="#d5973a"/>
<rect x="29" y="102" width="1" height="11" fill="#d2dbe8"/>
<rect x="29" y="100" width="2" height="2" fill="#d8e0ec"/>
<rect x="18" y="112" width="5.5" height="1" fill="#dfe4f0"/>
<rect x="23.5" y="112" width="5.5" height="1" fill="#8a9aa8"/>
<rect x="23.5" y="113" width="5.5" height="0.8" fill="#5c6c7a"/>
<rect x="29" y="110" width="3" height="3" fill="#d5d6e0"/>
<rect x="30" y="110" width="1" height="1" fill="#e05252"/>
<rect x="30" y="111" width="1" height="1" fill="#623232"/>
<rect x="19" y="104.2" width="1" height="1" fill="#e6dcd0"/>
<rect x="23" y="104.2" width="1" height="1" fill="#e6dcd0"/>
<rect x="27" y="104.2" width="1" height="1" fill="#e6dcd0"/>
<rect x="21" y="106.2" width="1" height="1" fill="#e6dcd0"/>
<rect x="25" y="106.2" width="1" height="1" fill="#e6dcd0"/>
<rect x="19" y="108.2" width="1" height="1" fill="#e6dcd0"/>
<rect x="23" y="108.2" width="1" height="1" fill="#e6dcd0"/>
<rect x="27" y="108.2" width="1" height="1" fill="#e6dcd0"/>
<rect x="21" y="110.2" width="1" height="1" fill="#e6dcd0"/>
<rect x="25" y="110.2" width="1" height="1" fill="#e6dcd0"/>
<rect x="18" y="150" width="11" height="1" fill="#d8dde9"/>
<rect x="18" y="151" width="11" height="10" fill="#d5973a"/>
<rect x="29" y="151" width="1" height="11" fill="#d2dbe8"/>
<rect x="29" y="149" width="2" height="2" fill="#d8e0ec"/>
<rect x="18" y="161" width="5.5" height="1" fill="#dfe4f0"/>
<rect x="23.5" y="161" width="5.5" height="1" fill="#8a9aa8"/>
<rect x="23.5" y="162" width="5.5" height="0.8" fill="#5c6c7a"/>
<rect x="29" y="159" width="3" height="3" fill="#d5d6e0"/>
<rect x="30" y="159" width="1" height="1" fill="#e05252"/>
<rect x="30" y="160" width="1" height="1" fill="#623232"/>
<rect x="19" y="153.2" width="1" height="1" fill="#e6dcd0"/>
<rect x="23" y="153.2" width="1" height="1" fill="#e6dcd0"/>
<rect x="27" y="153.2" width="1" height="1" fill="#e6dcd0"/>
<rect x="21" y="155.2" width="1" height="1" fill="#e6dcd0"/>
<rect x="25" y="155.2" width="1" height="1" fill="#e6dcd0"/>
<rect x="19" y="157.2" width="1" height="1" fill="#e6dcd0"/>
<rect x="23" y="157.2" width="1" height="1" fill="#e6dcd0"/>
<rect x="27" y="157.2" width="1" height="1" fill="#e6dcd0"/>
<rect x="21" y="159.2" width="1" height="1" fill="#e6dcd0"/>
<rect x="25" y="159.2" width="1" height="1" fill="#e6dcd0"/>
<rect x="111.5" y="112.7" width="10" height="1" fill="#64788a"/>
<rect x="109.5" y="113.7" width="14" height="1" fill="#64788a"/>
<rect x="107.5" y="114.7" width="18" height="1" fill="#64788a"/>
<rect x="107.5" y="115.7" width="18" height="1" fill="#64788a"/>
<rect x="107.5" y="116.7" width="18" height="1" fill="#64788a"/>
<rect x="109.5" y="117.7" width="14" height="1" fill="#64788a"/>
<rect x="111.5" y="118.7" width="10" height="1" fill="#64788a"/>
<rect x="114.46" y="91.67" width="5" height="1" fill="#2f4f9f"/>
<rect x="112.46" y="92.67" width="2" height="1" fill="#a2b2c2"/>
<rect x="114.46" y="92.67" width="5" height="1" fill="#c9d2e2"/>
<rect x="119.46" y="92.67" width="1" height="1" fill="#4262b2"/>
<rect x="112.46" y="93.67" width="1" height="1" fill="#5aa2a2"/>
<rect x="113.46" y="93.67" width="5" height="1" fill="#9ce0d6"/>
<rect x="118.46" y="93.67" width="1" height="1" fill="#56b0d2"/>
<rect x="119.46" y="93.67" width="1" height="1" fill="#d2daf2"/>
<rect x="112.46" y="94.67" width="1" height="1" fill="#5292c2"/>
<rect x="113.46" y="94.67" width="3" height="1" fill="#92dad2"/>
<rect x="116.46" y="94.67" width="1" height="1" fill="#3a9090"/>
<rect x="117.46" y="94.67" width="1" height="1" fill="#92dad2"/>
<rect x="118.46" y="94.67" width="1" height="1" fill="#56b0d2"/>
<rect x="119.46" y="94.67" width="1" height="1" fill="#3a60b0"/>
<rect x="113.46" y="95.67" width="2" height="1" fill="#eeaa58"/>
<rect x="115.46" y="95.67" width="2" height="1" fill="#ffd080"/>
<rect x="117.46" y="95.67" width="2" height="1" fill="#2a4a92"/>
<rect x="113.46" y="96.67" width="2" height="1" fill="#e8a252"/>
<rect x="115.46" y="96.67" width="2" height="1" fill="#ffd080"/>
<rect x="117.46" y="96.67" width="2" height="1" fill="#1a2a32"/>
<rect x="113.46" y="97.67" width="5" height="1" fill="#3a5cb4"/>
<rect x="118.46" y="97.67" width="1" height="1" fill="#1a2a32"/>
<rect x="119.46" y="97.67" width="2" height="1" fill="#3a5cb4"/>
<rect x="114.46" y="98.67" width="4" height="1" fill="#1a2a32"/>
<rect x="118.46" y="98.67" width="5" height="1" fill="#3a5cb4"/>
<rect x="112.46" y="99.67" width="10" height="1" fill="#3a5cb4"/>
<rect x="122.46" y="99.67" width="1" height="1" fill="#d2e2f2"/>
<rect x="112.46" y="100.67" width="8" height="1" fill="#3a5cb4"/>
<rect x="120.46" y="100.67" width="2" height="1" fill="#eef4fb"/>
<rect x="122.46" y="100.67" width="1" height="1" fill="#9aa8b8"/>
<rect x="112.46" y="101.67" width="7" height="1" fill="#3a5cb4"/>
<rect x="119.46" y="101.67" width="1" height="1" fill="#eef4fb"/>
<rect x="120.46" y="101.67" width="2" height="1" fill="#1a2a32"/>
<rect x="113.46" y="102.67" width="1" height="1" fill="#3a5cb4"/>
<rect x="114.46" y="102.67" width="1" height="1" fill="#eef4fb"/>
<rect x="115.46" y="102.67" width="2" height="1" fill="#3a5cb4"/>
<rect x="117.46" y="102.67" width="2" height="1" fill="#b4c4e2"/>
<rect x="119.46" y="102.67" width="1" height="1" fill="#1a2a32"/>
<rect x="120.46" y="102.67" width="1" height="1" fill="#8292a2"/>
<rect x="121.46" y="102.67" width="2" height="1" fill="#1a2a32"/>
<rect x="113.46" y="103.67" width="1" height="1" fill="#8a9ab0"/>
<rect x="114.46" y="103.67" width="1" height="1" fill="#eef4fb"/>
<rect x="115.46" y="103.67" width="1" height="1" fill="#9aa8c0"/>
<rect x="116.46" y="103.67" width="1" height="1" fill="#b4c4e2"/>
<rect x="117.46" y="103.67" width="3" height="1" fill="#1a2a32"/>
<rect x="120.46" y="103.67" width="1" height="1" fill="#8292a2"/>
<rect x="121.46" y="103.67" width="2" height="1" fill="#1a2a32"/>
<rect x="113.46" y="104.67" width="1" height="1" fill="#1a2a32"/>
<rect x="114.46" y="104.67" width="2" height="1" fill="#eef4fb"/>
<rect x="116.46" y="104.67" width="2" height="1" fill="#1a2a32"/>
<rect x="118.46" y="104.67" width="3" height="1" fill="#a2bae2"/>
<rect x="121.46" y="104.67" width="2" height="1" fill="#1a2a32"/>
<rect x="113.46" y="105.67" width="2" height="1" fill="#1a2a32"/>
<rect x="115.46" y="105.67" width="3" height="1" fill="#eef4fb"/>
<rect x="118.46" y="105.67" width="3" height="1" fill="#3a5cb4"/>
<rect x="121.46" y="105.67" width="1" height="1" fill="#1a2a32"/>
<rect x="113.46" y="106.67" width="2" height="1" fill="#c08240"/>
<rect x="115.46" y="106.67" width="2" height="1" fill="#1a2a32"/>
<rect x="117.46" y="106.67" width="4" height="1" fill="#3a5cb4"/>
<rect x="113.46" y="107.67" width="2" height="1" fill="#1a2a32"/>
<rect x="115.46" y="107.67" width="1" height="1" fill="#d08a3a"/>
<rect x="116.46" y="107.67" width="1" height="1" fill="#1a2a32"/>
<rect x="117.46" y="107.67" width="3" height="1" fill="#3a5cb4"/>
<rect x="113.46" y="108.67" width="5" height="1" fill="#1a2a32"/>
<rect x="118.46" y="108.67" width="2" height="1" fill="#d08822"/>
<rect x="113.46" y="109.67" width="2" height="1" fill="#1a2a32"/>
<rect x="116.46" y="109.67" width="2" height="1" fill="#1a2a32"/>
<rect x="118.46" y="109.67" width="2" height="1" fill="#d08822"/>
<rect x="113.46" y="110.67" width="2" height="1" fill="#1a2a32"/>
<rect x="116.46" y="110.67" width="2" height="1" fill="#1a2a32"/>
<rect x="118.46" y="110.67" width="2" height="1" fill="#d08822"/>
<rect x="114.46" y="111.67" width="1" height="1" fill="#1a2a32"/>
<rect x="117.46" y="111.67" width="1" height="1" fill="#1a2a32"/>
<rect x="118.46" y="111.67" width="1" height="1" fill="#d08822"/>
<rect x="114.46" y="112.67" width="1" height="1" fill="#1a2a32"/>
<rect x="117.46" y="112.67" width="2" height="1" fill="#1a2a32"/>
<rect x="114.46" y="113.67" width="1" height="1" fill="#1a2a32"/>
<rect x="118.46" y="113.67" width="1" height="1" fill="#1a2a32"/>
<rect x="113.46" y="114.67" width="2" height="1" fill="#2a3a48"/>
<rect x="118.46" y="114.67" width="1" height="1" fill="#1a2a32"/>
<rect x="118.46" y="115.67" width="1" height="1" fill="#1a2a32"/>
<rect x="117.46" y="116.67" width="2" height="1" fill="#2a3a48"/>
<rect x="236.4" y="134.3" width="10" height="1" fill="#64788a"/>
<rect x="233.4" y="135.3" width="16" height="1" fill="#64788a"/>
<rect x="232.4" y="136.3" width="18" height="1" fill="#64788a"/>
<rect x="232.4" y="137.3" width="18" height="1" fill="#64788a"/>
<rect x="233.4" y="138.3" width="16" height="1" fill="#64788a"/>
<rect x="234.4" y="139.3" width="14" height="1" fill="#64788a"/>
<rect x="239.4" y="140.3" width="4" height="1" fill="#64788a"/>
<rect x="241.4" y="111.8" width="3" height="1" fill="#c83232"/>
<rect x="240.4" y="112.8" width="5" height="1" fill="#c83232"/>
<rect x="240.4" y="113.8" width="6" height="1" fill="#c83232"/>
<rect x="246.4" y="113.8" width="2" height="1" fill="#c03248"/>
<rect x="239.4" y="114.8" width="8" height="1" fill="#2e2a2f"/>
<rect x="238.4" y="115.8" width="9" height="1" fill="#2e2a2f"/>
<rect x="238.4" y="116.8" width="9" height="1" fill="#2e2a2f"/>
<rect x="238.4" y="117.8" width="4" height="1" fill="#2e2a2f"/>
<rect x="242.4" y="117.8" width="3" height="1" fill="#c89a5a"/>
<rect x="245.4" y="117.8" width="2" height="1" fill="#2e2a2f"/>
<rect x="238.4" y="118.8" width="3" height="1" fill="#2e2a2f"/>
<rect x="241.4" y="118.8" width="1" height="1" fill="#c89a5a"/>
<rect x="242.4" y="118.8" width="1" height="1" fill="#2a2228"/>
<rect x="243.4" y="118.8" width="2" height="1" fill="#c89a5a"/>
<rect x="245.4" y="118.8" width="1" height="1" fill="#2a2228"/>
<rect x="246.4" y="118.8" width="1" height="1" fill="#2e2a2f"/>
<rect x="238.4" y="119.8" width="3" height="1" fill="#2e2a2f"/>
<rect x="241.4" y="119.8" width="3" height="1" fill="#c89a5a"/>
<rect x="244.4" y="119.8" width="2" height="1" fill="#b0824a"/>
<rect x="239.4" y="120.8" width="2" height="1" fill="#2e2a2f"/>
<rect x="241.4" y="120.8" width="3" height="1" fill="#c89a5a"/>
<rect x="244.4" y="120.8" width="2" height="1" fill="#b0824a"/>
<rect x="239.4" y="121.8" width="1" height="1" fill="#b09262"/>
<rect x="240.4" y="121.8" width="1" height="1" fill="#2f4fa0"/>
<rect x="241.4" y="121.8" width="3" height="1" fill="#c89a5a"/>
<rect x="238.4" y="122.8" width="1" height="1" fill="#b09262"/>
<rect x="239.4" y="122.8" width="5" height="1" fill="#2f4fa0"/>
<rect x="238.4" y="123.8" width="1" height="1" fill="#b09262"/>
<rect x="239.4" y="123.8" width="5" height="1" fill="#2f4fa0"/>
<rect x="238.4" y="124.8" width="1" height="1" fill="#b09262"/>
<rect x="239.4" y="124.8" width="5" height="1" fill="#2f4fa0"/>
<rect x="238.4" y="125.8" width="1" height="1" fill="#b09262"/>
<rect x="239.4" y="125.8" width="5" height="1" fill="#2f4fa0"/>
<rect x="237.4" y="126.8" width="1" height="1" fill="#f0e2a2"/>
<rect x="238.4" y="126.8" width="1" height="1" fill="#b09262"/>
<rect x="239.4" y="126.8" width="5" height="1" fill="#2f4fa0"/>
<rect x="244.4" y="126.8" width="2" height="1" fill="#8f9062"/>
<rect x="238.4" y="127.8" width="1" height="1" fill="#a0a060"/>
<rect x="239.4" y="127.8" width="2" height="1" fill="#f8d052"/>
<rect x="241.4" y="127.8" width="3" height="1" fill="#2f4fa0"/>
<rect x="245.4" y="127.8" width="1" height="1" fill="#8f9062"/>
<rect x="238.4" y="128.8" width="1" height="1" fill="#70a862"/>
<rect x="239.4" y="128.8" width="4" height="1" fill="#f8d052"/>
<rect x="243.4" y="128.8" width="1" height="1" fill="#9aa858"/>
<rect x="238.4" y="129.8" width="3" height="1" fill="#70a862"/>
<rect x="241.4" y="129.8" width="5" height="1" fill="#f8d052"/>
<rect x="238.4" y="130.8" width="4" height="1" fill="#70a862"/>
<rect x="243.4" y="130.8" width="5" height="1" fill="#f8d052"/>
<rect x="238.4" y="131.8" width="3" height="1" fill="#70a862"/>
<rect x="242.4" y="131.8" width="1" height="1" fill="#7a6a50"/>
<rect x="245.4" y="131.8" width="3" height="1" fill="#f8d052"/>
<rect x="238.4" y="132.8" width="3" height="1" fill="#70a862"/>
<rect x="242.4" y="132.8" width="1" height="1" fill="#a07252"/>
<rect x="235.4" y="133.8" width="2" height="1" fill="#f8d052"/>
<rect x="238.4" y="133.8" width="2" height="1" fill="#70a862"/>
<rect x="242.4" y="133.8" width="1" height="1" fill="#c09262"/>
<rect x="243.4" y="133.8" width="2" height="1" fill="#5272a2"/>
<rect x="234.4" y="134.8" width="1" height="1" fill="#c2e2f2"/>
<rect x="236.4" y="134.8" width="1" height="1" fill="#f8d052"/>
<rect x="237.4" y="134.8" width="1" height="1" fill="#d0a040"/>
<rect x="242.4" y="134.8" width="3" height="1" fill="#d2b242"/>
<rect x="236.4" y="135.8" width="1" height="1" fill="#c2cae2"/>
<rect x="237.4" y="135.8" width="1" height="1" fill="#f8d052"/>
<rect x="242.4" y="135.8" width="1" height="1" fill="#a0a8b8"/>
<rect x="244.4" y="135.8" width="1" height="1" fill="#a0a8b8"/>
</g>
</g></g>
<g>
<path d="M93.8 94.3H238V101.8H101.3V186.8H93.8Z" fill="rgba(255,255,255,0.125)"/>
<path d="M1714 94.3H1569.8V101.8H1706.5V186.8H1714Z" fill="rgba(255,255,255,0.125)"/>
<path d="M93.8 907.5H238V900H101.3V815H93.8Z" fill="rgba(255,255,255,0.125)"/>
<path d="M1714 907.5H1569.8V900H1706.5V815H1714Z" fill="rgba(255,255,255,0.125)"/>
</g>
<g shape-rendering="auto">
<path d="M139.3 131.8h7.6v1.9h3.7v3.7h3.7v11.3h-3.7v3.7h-3.7v1.9h-7.6v-1.9h-3.7v-3.7h-3.7v-11.3h3.7v-3.7h3.7z" fill="#cd1212"/>
<text class="m" x="160.5" y="153.8" font-size="28" textLength="56" lengthAdjust="spacingAndGlyphs" fill="#c9c9d3">REC</text>
</g>
<g><g transform="translate(0 -1) scale(3.76667)">
<rect x="43" y="194" width="11" height="7" fill="#3c9a8b"/>
<rect x="43" y="201" width="5" height="1" fill="#3c9a8b"/>
<rect x="54" y="200" width="2" height="1" fill="#3c9a8b"/>
<rect x="55" y="200" width="2" height="1" fill="#63b5a6"/>
<rect x="47" y="202" width="1" height="5" fill="#3c9a8b"/>
<rect x="47" y="205" width="1" height="2" fill="#63b5a6"/>
<rect x="47" y="228" width="1" height="5" fill="#3c9a8b"/>
<rect x="47" y="228" width="1" height="2" fill="#63b5a6"/>
<rect x="46" y="233" width="3" height="3" fill="#3c9a8b"/>
<rect x="49" y="234" width="5" height="1" fill="#3c9a8b"/>
<rect x="52" y="234" width="2" height="1" fill="#63b5a6"/>
<rect x="49" y="202" width="31" height="31" fill="url(#pg0)"/>
<rect x="81" y="214" width="41" height="9" fill="#226a5f"/>
<rect x="81" y="224" width="41" height="9" fill="#20584f"/>
<rect x="82" y="224" width="9" height="9" fill="#2e8778"/>
<rect x="92" y="224" width="9" height="9" fill="#2e8778"/>
<rect x="83.2" y="225.4" width="0.7" height="5.5" fill="#226055"/>
<rect x="85" y="226" width="4" height="5" fill="#226055"/>
<rect x="89" y="227" width="1" height="3" fill="#226055"/>
<rect x="94" y="226" width="4.2" height="0.9" fill="#226055"/>
<rect x="95.2" y="228.1" width="3.8" height="0.9" fill="#226055"/>
<rect x="94" y="230" width="4.2" height="0.9" fill="#226055"/>
<rect x="150" y="194" width="11" height="7" fill="#8b3b3b"/>
<rect x="150" y="201" width="5" height="1" fill="#8b3b3b"/>
<rect x="161" y="200" width="2" height="1" fill="#8b3b3b"/>
<rect x="162" y="200" width="2" height="1" fill="#a95f5f"/>
<rect x="154" y="202" width="1" height="5" fill="#8b3b3b"/>
<rect x="154" y="205" width="1" height="2" fill="#a95f5f"/>
<rect x="154" y="228" width="1" height="5" fill="#8b3b3b"/>
<rect x="154" y="228" width="1" height="2" fill="#a95f5f"/>
<rect x="153" y="233" width="3" height="3" fill="#8b3b3b"/>
<rect x="156" y="234" width="5" height="1" fill="#8b3b3b"/>
<rect x="159" y="234" width="2" height="1" fill="#a95f5f"/>
<rect x="156" y="202" width="31" height="31" fill="url(#pg1)"/>
<rect x="188" y="214" width="41" height="9" fill="#5b2929"/>
<rect x="188" y="224" width="41" height="9" fill="#452323"/>
<rect x="189" y="224" width="9" height="9" fill="#8e3939"/>
<rect x="199" y="224" width="9" height="9" fill="#8e3939"/>
<rect x="190.2" y="225.4" width="0.7" height="5.5" fill="#5a2626"/>
<rect x="192" y="226" width="4" height="5" fill="#5a2626"/>
<rect x="196" y="227" width="1" height="3" fill="#5a2626"/>
<rect x="201" y="226" width="4.2" height="0.9" fill="#5a2626"/>
<rect x="202.2" y="228.1" width="3.8" height="0.9" fill="#5a2626"/>
<rect x="201" y="230" width="4.2" height="0.9" fill="#5a2626"/>
<rect x="257" y="194" width="11" height="7" fill="#8a8238"/>
<rect x="257" y="201" width="5" height="1" fill="#8a8238"/>
<rect x="268" y="200" width="2" height="1" fill="#8a8238"/>
<rect x="269" y="200" width="2" height="1" fill="#a8a368"/>
<rect x="261" y="202" width="1" height="5" fill="#8a8238"/>
<rect x="261" y="205" width="1" height="2" fill="#a8a368"/>
<rect x="261" y="228" width="1" height="5" fill="#8a8238"/>
<rect x="261" y="228" width="1" height="2" fill="#a8a368"/>
<rect x="260" y="233" width="3" height="3" fill="#8a8238"/>
<rect x="263" y="234" width="5" height="1" fill="#8a8238"/>
<rect x="266" y="234" width="2" height="1" fill="#a8a368"/>
<rect x="263" y="202" width="31" height="31" fill="url(#pg2)"/>
<rect x="295" y="214" width="41" height="9" fill="#4b4a27"/>
<rect x="295" y="224" width="41" height="9" fill="#3f3f23"/>
<rect x="364" y="194" width="11" height="7" fill="#3f7b39"/>
<rect x="364" y="201" width="5" height="1" fill="#3f7b39"/>
<rect x="375" y="200" width="2" height="1" fill="#3f7b39"/>
<rect x="376" y="200" width="2" height="1" fill="#6a9a62"/>
<rect x="368" y="202" width="1" height="5" fill="#3f7b39"/>
<rect x="368" y="205" width="1" height="2" fill="#6a9a62"/>
<rect x="368" y="228" width="1" height="5" fill="#3f7b39"/>
<rect x="368" y="228" width="1" height="2" fill="#6a9a62"/>
<rect x="367" y="233" width="3" height="3" fill="#3f7b39"/>
<rect x="370" y="234" width="5" height="1" fill="#3f7b39"/>
<rect x="373" y="234" width="2" height="1" fill="#6a9a62"/>
<rect x="370" y="202" width="31" height="31" fill="url(#pg3)"/>
<rect x="402" y="214" width="41" height="9" fill="#2b4b27"/>
<rect x="402" y="224" width="41" height="9" fill="#264023"/>
<rect x="65" y="203" width="2" height="1" fill="#b23a3a"/>
<rect x="63" y="204" width="6" height="1" fill="#b23a3a"/>
<rect x="62" y="205" width="8" height="1" fill="#b23a3a"/>
<rect x="61" y="206" width="10" height="1" fill="#b23a3a"/>
<rect x="61" y="207" width="10" height="1" fill="#b23a3a"/>
<rect x="61" y="208" width="17" height="1" fill="#b23a3a"/>
<rect x="59" y="209" width="13" height="1" fill="#2c2c31"/>
<rect x="72" y="209" width="6" height="1" fill="#22373b"/>
<rect x="58" y="210" width="17" height="1" fill="#2c2c31"/>
<rect x="58" y="211" width="17" height="1" fill="#302e33"/>
<rect x="57" y="212" width="18" height="1" fill="#302e33"/>
<rect x="57" y="213" width="18" height="1" fill="#2c2c31"/>
<rect x="57" y="214" width="18" height="1" fill="#2c2c31"/>
<rect x="58" y="215" width="8" height="1" fill="#2c2c31"/>
<rect x="66" y="215" width="6" height="1" fill="#c29b5c"/>
<rect x="72" y="215" width="2" height="1" fill="#2c2c31"/>
<rect x="59" y="216" width="4" height="1" fill="#2c2c31"/>
<rect x="63" y="216" width="10" height="1" fill="#c29b5c"/>
<rect x="60" y="217" width="3" height="1" fill="#2c2c31"/>
<rect x="63" y="217" width="2" height="1" fill="#a98049"/>
<rect x="65" y="217" width="2" height="1" fill="#3a3038"/>
<rect x="67" y="217" width="4" height="1" fill="#c29b5c"/>
<rect x="71" y="217" width="2" height="1" fill="#3a3038"/>
<rect x="60" y="218" width="3" height="1" fill="#2c2c31"/>
<rect x="63" y="218" width="2" height="1" fill="#a98049"/>
<rect x="65" y="218" width="2" height="1" fill="#3a3038"/>
<rect x="67" y="218" width="2" height="1" fill="#c29b5c"/>
<rect x="69" y="218" width="1" height="1" fill="#a98049"/>
<rect x="70" y="218" width="1" height="1" fill="#c29b5c"/>
<rect x="71" y="218" width="2" height="1" fill="#3a3038"/>
<rect x="61" y="219" width="2" height="1" fill="#2c2c31"/>
<rect x="63" y="219" width="2" height="1" fill="#a98049"/>
<rect x="65" y="219" width="4" height="1" fill="#c29b5c"/>
<rect x="69" y="219" width="1" height="1" fill="#a98049"/>
<rect x="70" y="219" width="3" height="1" fill="#c29b5c"/>
<rect x="62" y="220" width="1" height="1" fill="#2c2c31"/>
<rect x="63" y="220" width="2" height="1" fill="#a98049"/>
<rect x="65" y="220" width="4" height="1" fill="#c29b5c"/>
<rect x="69" y="220" width="1" height="1" fill="#a98049"/>
<rect x="70" y="220" width="3" height="1" fill="#c29b5c"/>
<rect x="64" y="221" width="2" height="1" fill="#a98049"/>
<rect x="66" y="221" width="7" height="1" fill="#c29b5c"/>
<rect x="65" y="222" width="1" height="1" fill="#a98049"/>
<rect x="66" y="222" width="2" height="1" fill="#c29b5c"/>
<rect x="68" y="222" width="2" height="1" fill="#b07a48"/>
<rect x="70" y="222" width="3" height="1" fill="#c29b5c"/>
<rect x="65" y="223" width="7" height="1" fill="#c29b5c"/>
<rect x="66" y="224" width="4" height="1" fill="#a98049"/>
<rect x="59" y="225" width="3" height="1" fill="#b08a4b"/>
<rect x="62" y="225" width="3" height="1" fill="#3056a2"/>
<rect x="65" y="225" width="3" height="1" fill="#b08a4b"/>
<rect x="68" y="225" width="3" height="1" fill="#3056a2"/>
<rect x="59" y="226" width="3" height="1" fill="#b08a4b"/>
<rect x="62" y="226" width="3" height="1" fill="#3056a2"/>
<rect x="66" y="226" width="2" height="1" fill="#b08a4b"/>
<rect x="68" y="226" width="3" height="1" fill="#3056a2"/>
<rect x="71" y="226" width="1" height="1" fill="#b08a4b"/>
<rect x="58" y="227" width="4" height="1" fill="#b08a4b"/>
<rect x="62" y="227" width="2" height="1" fill="#3056a2"/>
<rect x="64" y="227" width="3" height="1" fill="#b08a4b"/>
<rect x="67" y="227" width="4" height="1" fill="#3056a2"/>
<rect x="71" y="227" width="1" height="1" fill="#b08a4b"/>
<rect x="58" y="228" width="3" height="1" fill="#b08a4b"/>
<rect x="61" y="228" width="2" height="1" fill="#3056a2"/>
<rect x="63" y="228" width="3" height="1" fill="#b08a4b"/>
<rect x="66" y="228" width="5" height="1" fill="#3056a2"/>
<rect x="71" y="228" width="2" height="1" fill="#b08a4b"/>
<rect x="58" y="229" width="3" height="1" fill="#b08a4b"/>
<rect x="61" y="229" width="1" height="1" fill="#3056a2"/>
<rect x="62" y="229" width="3" height="1" fill="#b08a4b"/>
<rect x="65" y="229" width="6" height="1" fill="#284a90"/>
<rect x="71" y="229" width="2" height="1" fill="#b08a4b"/>
<rect x="58" y="230" width="4" height="1" fill="#b08a4b"/>
<rect x="62" y="230" width="2" height="1" fill="#b08a4b"/>
<rect x="64" y="230" width="7" height="1" fill="#3056a2"/>
<rect x="71" y="230" width="2" height="1" fill="#b08a4b"/>
<rect x="57" y="231" width="6" height="1" fill="#b08a4b"/>
<rect x="63" y="231" width="8" height="1" fill="#284a90"/>
<rect x="71" y="231" width="2" height="1" fill="#b08a4b"/>
<rect x="57" y="232" width="6" height="1" fill="#b08a4b"/>
<rect x="63" y="232" width="8" height="1" fill="#3056a2"/>
<rect x="71" y="232" width="2" height="1" fill="#b08a4b"/>
<rect x="64" y="205" width="1" height="3" fill="#c44646"/>
<rect x="66" y="205" width="1" height="3" fill="#c44646"/>
<rect x="68" y="205" width="1" height="3" fill="#c44646"/>
<rect x="51" y="212" width="3" height="1" fill="#f4c250"/>
<rect x="51" y="212" width="1" height="1" fill="#d9a840"/>
<rect x="52" y="213" width="4" height="1" fill="#f4c250"/>
<rect x="52" y="213" width="1" height="1" fill="#d9a840"/>
<rect x="53" y="214" width="4" height="1" fill="#f4c250"/>
<rect x="53" y="214" width="1" height="1" fill="#d9a840"/>
<rect x="54" y="215" width="4" height="1" fill="#f4c250"/>
<rect x="54" y="215" width="1" height="1" fill="#d9a840"/>
<rect x="55" y="216" width="4" height="1" fill="#f4c250"/>
<rect x="55" y="216" width="1" height="1" fill="#d9a840"/>
<rect x="55" y="217" width="4" height="1" fill="#f4c250"/>
<rect x="55" y="217" width="1" height="1" fill="#d9a840"/>
<rect x="56" y="218" width="4" height="1" fill="#f4c250"/>
<rect x="56" y="218" width="1" height="1" fill="#d9a840"/>
<rect x="57" y="219" width="4" height="1" fill="#f4c250"/>
<rect x="57" y="219" width="1" height="1" fill="#d9a840"/>
<rect x="58" y="220" width="4" height="1" fill="#f4c250"/>
<rect x="58" y="220" width="1" height="1" fill="#d9a840"/>
<rect x="59" y="221" width="4" height="1" fill="#f4c250"/>
<rect x="59" y="221" width="1" height="1" fill="#d9a840"/>
<rect x="60" y="222" width="4" height="1" fill="#f4c250"/>
<rect x="60" y="222" width="1" height="1" fill="#d9a840"/>
<rect x="61" y="223" width="4" height="1" fill="#f4c250"/>
<rect x="61" y="223" width="1" height="1" fill="#d9a840"/>
<rect x="62" y="224" width="4" height="1" fill="#f4c250"/>
<rect x="62" y="224" width="1" height="1" fill="#d9a840"/>
<rect x="63" y="225" width="4" height="1" fill="#f4c250"/>
<rect x="63" y="225" width="1" height="1" fill="#d9a840"/>
<rect x="64" y="226" width="4" height="1" fill="#f4c250"/>
<rect x="64" y="226" width="1" height="1" fill="#d9a840"/>
<rect x="67" y="228" width="2" height="1" fill="#f4c250"/>
<rect x="67" y="229" width="3" height="1" fill="#f4c250"/>
<rect x="68" y="230" width="2" height="1" fill="#f4c250"/>
<rect x="169" y="206" width="3" height="1" fill="#3152a6"/>
<rect x="172" y="206" width="5" height="1" fill="#4a72ca"/>
<rect x="167" y="207" width="5" height="1" fill="#3a60b8"/>
<rect x="172" y="207" width="6" height="1" fill="#4a72ca"/>
<rect x="166" y="208" width="5" height="1" fill="#3a60b8"/>
<rect x="171" y="208" width="8" height="1" fill="#3152a6"/>
<rect x="165" y="209" width="3" height="1" fill="#3a60b8"/>
<rect x="168" y="209" width="2" height="1" fill="#a6b2ce"/>
<rect x="170" y="209" width="12" height="1" fill="#bccfe9"/>
<rect x="165" y="210" width="1" height="1" fill="#3a60b8"/>
<rect x="166" y="210" width="4" height="1" fill="#a2b2d2"/>
<rect x="170" y="210" width="12" height="1" fill="#b6cbe8"/>
<rect x="165" y="211" width="2" height="1" fill="#b0bcd8"/>
<rect x="167" y="211" width="1" height="1" fill="#3a60b8"/>
<rect x="168" y="211" width="1" height="1" fill="#7aa2da"/>
<rect x="169" y="211" width="10" height="1" fill="#c9d1ba"/>
<rect x="179" y="211" width="3" height="1" fill="#3a6a72"/>
<rect x="165" y="212" width="2" height="1" fill="#3a60b8"/>
<rect x="167" y="212" width="2" height="1" fill="#6e96d6"/>
<rect x="169" y="212" width="1" height="1" fill="#d2d3ae"/>
<rect x="170" y="212" width="4" height="1" fill="#b0a172"/>
<rect x="174" y="212" width="3" height="1" fill="#d9d9ba"/>
<rect x="177" y="212" width="2" height="1" fill="#b0a172"/>
<rect x="179" y="212" width="3" height="1" fill="#3a6a72"/>
<rect x="165" y="213" width="2" height="1" fill="#3a60b8"/>
<rect x="167" y="213" width="2" height="1" fill="#6e96d6"/>
<rect x="169" y="213" width="2" height="1" fill="#d2d3ae"/>
<rect x="171" y="213" width="2" height="1" fill="#2f7282"/>
<rect x="173" y="213" width="2" height="1" fill="#a9c9aa"/>
<rect x="175" y="213" width="1" height="1" fill="#d2aa92"/>
<rect x="176" y="213" width="1" height="1" fill="#d2d3ae"/>
<rect x="177" y="213" width="2" height="1" fill="#2f7282"/>
<rect x="179" y="213" width="2" height="1" fill="#3a6a72"/>
<rect x="165" y="214" width="2" height="1" fill="#3152a6"/>
<rect x="167" y="214" width="2" height="1" fill="#6e96d6"/>
<rect x="169" y="214" width="2" height="1" fill="#d2d3ae"/>
<rect x="171" y="214" width="2" height="1" fill="#2f7282"/>
<rect x="173" y="214" width="1" height="1" fill="#a9c9aa"/>
<rect x="174" y="214" width="2" height="1" fill="#d9a98a"/>
<rect x="176" y="214" width="1" height="1" fill="#d2d3ae"/>
<rect x="177" y="214" width="2" height="1" fill="#2f7282"/>
<rect x="179" y="214" width="2" height="1" fill="#3a6a72"/>
<rect x="166" y="215" width="2" height="1" fill="#3a60b8"/>
<rect x="168" y="215" width="1" height="1" fill="#6e96d6"/>
<rect x="169" y="215" width="1" height="1" fill="#e2b272"/>
<rect x="170" y="215" width="4" height="1" fill="#ffdf9e"/>
<rect x="174" y="215" width="2" height="1" fill="#e9b28a"/>
<rect x="176" y="215" width="3" height="1" fill="#ffdf9e"/>
<rect x="166" y="216" width="2" height="1" fill="#3a60b8"/>
<rect x="168" y="216" width="2" height="1" fill="#6e96d6"/>
<rect x="170" y="216" width="9" height="1" fill="#ffdf9e"/>
<rect x="179" y="216" width="1" height="1" fill="#203a72"/>
<rect x="167" y="217" width="2" height="1" fill="#3a60b8"/>
<rect x="169" y="217" width="1" height="1" fill="#6e96d6"/>
<rect x="170" y="217" width="9" height="1" fill="#ffdf9e"/>
<rect x="179" y="217" width="1" height="1" fill="#203a72"/>
<rect x="167" y="218" width="1" height="1" fill="#18284a"/>
<rect x="168" y="218" width="2" height="1" fill="#3a60b8"/>
<rect x="170" y="218" width="1" height="1" fill="#6e96d6"/>
<rect x="171" y="218" width="3" height="1" fill="#ffdf9e"/>
<rect x="174" y="218" width="2" height="1" fill="#e2a262"/>
<rect x="176" y="218" width="3" height="1" fill="#ffdf9e"/>
<rect x="167" y="219" width="2" height="1" fill="#18284a"/>
<rect x="169" y="219" width="2" height="1" fill="#3a60b8"/>
<rect x="171" y="219" width="2" height="1" fill="#8aaae2"/>
<rect x="173" y="219" width="6" height="1" fill="#ffdf9e"/>
<rect x="179" y="219" width="1" height="1" fill="#a9c2ea"/>
<rect x="162" y="220" width="5" height="1" fill="#3a60b8"/>
<rect x="167" y="220" width="3" height="1" fill="#18284a"/>
<rect x="170" y="220" width="3" height="1" fill="#3a60b8"/>
<rect x="173" y="220" width="6" height="1" fill="#6e96d6"/>
<rect x="179" y="220" width="1" height="1" fill="#3a60b8"/>
<rect x="160" y="221" width="8" height="1" fill="#3a60b8"/>
<rect x="168" y="221" width="3" height="1" fill="#18284a"/>
<rect x="171" y="221" width="8" height="1" fill="#3a60b8"/>
<rect x="159" y="222" width="10" height="1" fill="#3a60b8"/>
<rect x="169" y="222" width="4" height="1" fill="#18284a"/>
<rect x="173" y="222" width="4" height="1" fill="#1a3050"/>
<rect x="177" y="222" width="1" height="1" fill="#92aada"/>
<rect x="178" y="222" width="1" height="1" fill="#3a60b8"/>
<rect x="159" y="223" width="1" height="1" fill="#b8c8e2"/>
<rect x="160" y="223" width="12" height="1" fill="#3a60b8"/>
<rect x="172" y="223" width="5" height="1" fill="#18284a"/>
<rect x="177" y="223" width="1" height="1" fill="#92aada"/>
<rect x="178" y="223" width="2" height="1" fill="#3a60b8"/>
<rect x="160" y="224" width="1" height="1" fill="#b8c8e2"/>
<rect x="161" y="224" width="3" height="1" fill="#3a60b8"/>
<rect x="164" y="224" width="13" height="1" fill="#3152a6"/>
<rect x="177" y="224" width="1" height="1" fill="#92aada"/>
<rect x="178" y="224" width="3" height="1" fill="#3a60b8"/>
<rect x="161" y="225" width="1" height="1" fill="#b8c8e2"/>
<rect x="162" y="225" width="3" height="1" fill="#3a60b8"/>
<rect x="165" y="225" width="12" height="1" fill="#3152a6"/>
<rect x="177" y="225" width="1" height="1" fill="#88a2d6"/>
<rect x="178" y="225" width="4" height="1" fill="#3a60b8"/>
<rect x="162" y="226" width="1" height="1" fill="#b8c8e2"/>
<rect x="163" y="226" width="3" height="1" fill="#3a60b8"/>
<rect x="166" y="226" width="10" height="1" fill="#3152a6"/>
<rect x="176" y="226" width="1" height="1" fill="#92aada"/>
<rect x="177" y="226" width="5" height="1" fill="#3a60b8"/>
<rect x="160" y="227" width="3" height="1" fill="rgba(24,52,60,0.45)"/>
<rect x="163" y="227" width="2" height="1" fill="#b8c8e2"/>
<rect x="165" y="227" width="9" height="1" fill="#3a60b8"/>
<rect x="174" y="227" width="2" height="1" fill="#92aada"/>
<rect x="176" y="227" width="6" height="1" fill="#3a60b8"/>
<rect x="159" y="228" width="6" height="1" fill="rgba(24,52,60,0.45)"/>
<rect x="165" y="228" width="2" height="1" fill="#b8c8e2"/>
<rect x="167" y="228" width="4" height="1" fill="#3a60b8"/>
<rect x="171" y="228" width="3" height="1" fill="#92aada"/>
<rect x="174" y="228" width="7" height="1" fill="#3a60b8"/>
<rect x="181" y="228" width="1" height="1" fill="#b8c8e2"/>
<rect x="159" y="229" width="7" height="1" fill="rgba(24,52,60,0.45)"/>
<rect x="167" y="229" width="2" height="1" fill="#b8c8e2"/>
<rect x="169" y="229" width="10" height="1" fill="#3a60b8"/>
<rect x="179" y="229" width="2" height="1" fill="#b8c8e2"/>
<rect x="159" y="230" width="6" height="1" fill="rgba(24,52,60,0.45)"/>
<rect x="166" y="230" width="3" height="1" fill="rgba(24,52,60,0.45)"/>
<rect x="169" y="230" width="3" height="1" fill="#b8c8e2"/>
<rect x="172" y="230" width="7" height="1" fill="#3a60b8"/>
<rect x="179" y="230" width="2" height="1" fill="#1e2c3c"/>
<rect x="160" y="231" width="4" height="1" fill="rgba(24,52,60,0.45)"/>
<rect x="172" y="231" width="7" height="1" fill="#c2d2ea"/>
</g></g>
<g shape-rendering="auto">
<text class="m" x="169.17" y="752" font-size="27.5" textLength="28.5" lengthAdjust="spacingAndGlyphs" fill="#0b2420">P1</text>
<text class="m" x="572.2" y="752" font-size="27.5" textLength="28.5" lengthAdjust="spacingAndGlyphs" fill="#1b0c0c">P2</text>
<text class="m" x="975.23" y="752" font-size="27.5" textLength="28.5" lengthAdjust="spacingAndGlyphs" fill="#15140a">P3</text>
<text class="m" x="1378.27" y="752" font-size="27.5" textLength="28.5" lengthAdjust="spacingAndGlyphs" fill="#0b160a">P4</text>
<text class="m" x="307.6" y="834.2" font-size="32" textLength="72" lengthAdjust="spacingAndGlyphs" fill="#0b2420">Gert</text>
<clipPath id="nm2"><rect x="707.9" y="800" width="160" height="42"/></clipPath>
<text class="m" clip-path="url(#nm2)" x="706.5" y="834.2" font-size="32" textLength="147.5" lengthAdjust="spacingAndGlyphs" fill="#1b0c0c">Mc.Kleent</text>
</g>
<g>
<rect x="1626.77" y="964" width="19.67" height="27.3" fill="#3e3e3e"/>
<rect x="1623" y="967.77" width="27.2" height="19.77" fill="#3e3e3e"/>
<rect x="1626.77" y="964" width="19.67" height="3.77" fill="#4e4e4e"/>
<rect x="1630.9" y="979.2" width="4.3" height="7.6" fill="#98c898"/>
<rect x="1630.9" y="983.2" width="8" height="3.6" fill="#98c898"/>
<rect x="1638.9" y="975.9" width="3.6" height="3.3" fill="#a8d0a8"/>
<rect x="1635.2" y="979.2" width="3.8" height="4" fill="#2f6a34"/>
<rect x="1668.87" y="964" width="14.37" height="27.3" fill="#3e3e3e"/>
<rect x="1665.1" y="967.77" width="21.9" height="19.77" fill="#3e3e3e"/>
<rect x="1668.87" y="964" width="14.37" height="3.77" fill="#4e4e4e"/>
<rect x="1669.1" y="975.9" width="3.65" height="3.65" fill="#5f9a62"/>
<rect x="1672.75" y="975.9" width="3.65" height="3.65" fill="#2f6a34"/>
<rect x="1676.4" y="975.9" width="3.65" height="3.65" fill="#98c898"/>
<rect x="1669.1" y="979.55" width="3.65" height="3.65" fill="#98c898"/>
<rect x="1672.75" y="979.55" width="3.65" height="3.65" fill="#98c898"/>
<rect x="1676.4" y="979.55" width="3.65" height="3.65" fill="#2f6a34"/>
<rect x="1669.1" y="983.2" width="3.65" height="3.65" fill="#98c898"/>
<rect x="1672.75" y="983.2" width="3.65" height="3.65" fill="#2f6a34"/>
<rect x="1676.4" y="983.2" width="3.65" height="3.65" fill="#98c898"/>
<rect x="1706.67" y="964" width="14.37" height="27.3" fill="#3e3e3e"/>
<rect x="1702.9" y="967.77" width="21.9" height="19.77" fill="#3e3e3e"/>
<rect x="1706.67" y="964" width="14.37" height="3.77" fill="#4e4e4e"/>
<rect x="1713.2" y="978.5" width="5.7" height="5.5" fill="#3a5a3c"/>
<rect x="1713.9" y="979.2" width="4.3" height="4" fill="#b4c8b4"/>
<rect x="1740.3" y="956.8" width="37.9" height="40.7" fill="#404040"/>
<rect x="1744" y="953" width="34.2" height="7.4" fill="#4d4d4d"/>
<rect x="1740.3" y="956.8" width="3.7" height="37.2" fill="#474747"/>
<rect x="1740.3" y="956.8" width="3.7" height="7.2" fill="#4d4d4d"/>
<rect x="1759.5" y="968" width="3.8" height="14.6" fill="#86d086"/>
<rect x="1755.7" y="971.8" width="11.3" height="3.7" fill="#86d086"/>
<rect x="1748" y="979.4" width="3.8" height="7.6" fill="#86d086"/>
<rect x="1751.8" y="975.6" width="3.8" height="3.8" fill="#6cae6c"/>
<rect x="1751.8" y="987" width="3.8" height="3.8" fill="#86d086"/>
<rect x="1755.6" y="990.8" width="11.4" height="3.4" fill="#86d086"/>
<rect x="1767" y="975.6" width="3.8" height="3.8" fill="#6cae6c"/>
<rect x="1770.8" y="979.4" width="3.5" height="7.6" fill="#86d086"/>
<rect x="1767" y="987" width="3.8" height="3.8" fill="#86d086"/>
</g>
</svg>
</body></html>
